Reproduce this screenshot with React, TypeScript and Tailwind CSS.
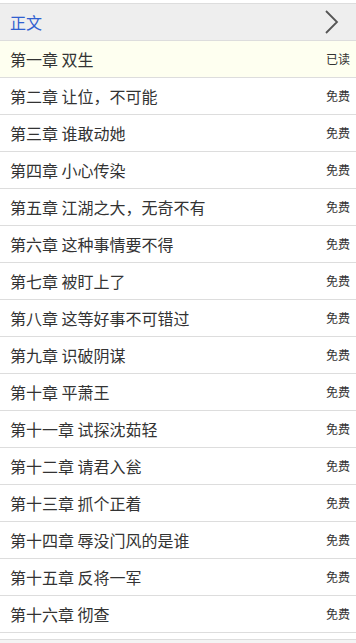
import React from 'react';

const chapters = [
  {title: '第一章 双生', tag: '已读', read: true},
  {title: '第二章 让位，不可能', tag: '免费'},
  {title: '第三章 谁敢动她', tag: '免费'},
  {title: '第四章 小心传染', tag: '免费'},
  {title: '第五章 江湖之大，无奇不有', tag: '免费'},
  {title: '第六章 这种事情要不得', tag: '免费'},
  {title: '第七章 被盯上了', tag: '免费'},
  {title: '第八章 这等好事不可错过', tag: '免费'},
  {title: '第九章 识破阴谋', tag: '免费'},
  {title: '第十章 平萧王', tag: '免费'},
  {title: '第十一章 试探沈茹轻', tag: '免费'},
  {title: '第十二章 请君入瓮', tag: '免费'},
  {title: '第十三章 抓个正着', tag: '免费'},
  {title: '第十四章 辱没门风的是谁', tag: '免费'},
  {title: '第十五章 反将一军', tag: '免费'},
  {title: '第十六章 彻查', tag: '免费'},
];

export default function App() {
  return (
    <div
      className="w-[356px] h-[643px] overflow-hidden bg-white pt-[3px]"
      style={{fontFamily: '"Noto Sans CJK SC", "Liberation Sans", sans-serif'}}
    >
      <div className="h-[38px] flex items-center justify-between bg-[#eeeeee] border-y border-[#dddddd] pl-[10px] pr-[16px]">
        <span className="text-[16px] text-[#3060d0]">正文</span>
        <svg width="16" height="26" viewBox="0 0 16 26" fill="none">
          <path d="M2 2 L13 13 L2 24" stroke="#555" strokeWidth="1.8" />
        </svg>
      </div>
      <div>
        {chapters.map((c, i) => (
          <div
            key={i}
            className={`h-[37px] flex items-center justify-between pl-[10px] pr-[6px] border-b border-[#dddddd] ${
              c.read ? 'bg-[#fefff0]' : 'bg-white'
            }`}
          >
            <span className="text-[16px] text-[#333333]">{c.title}</span>
            <span className="text-[12px] text-[#333333]">{c.tag}</span>
          </div>
        ))}
        <div className="h-[7px] bg-white border-b border-[#dddddd]" />
        <div className="h-[10px] bg-[#f4f4f4]" />
      </div>
    </div>
  );
}
